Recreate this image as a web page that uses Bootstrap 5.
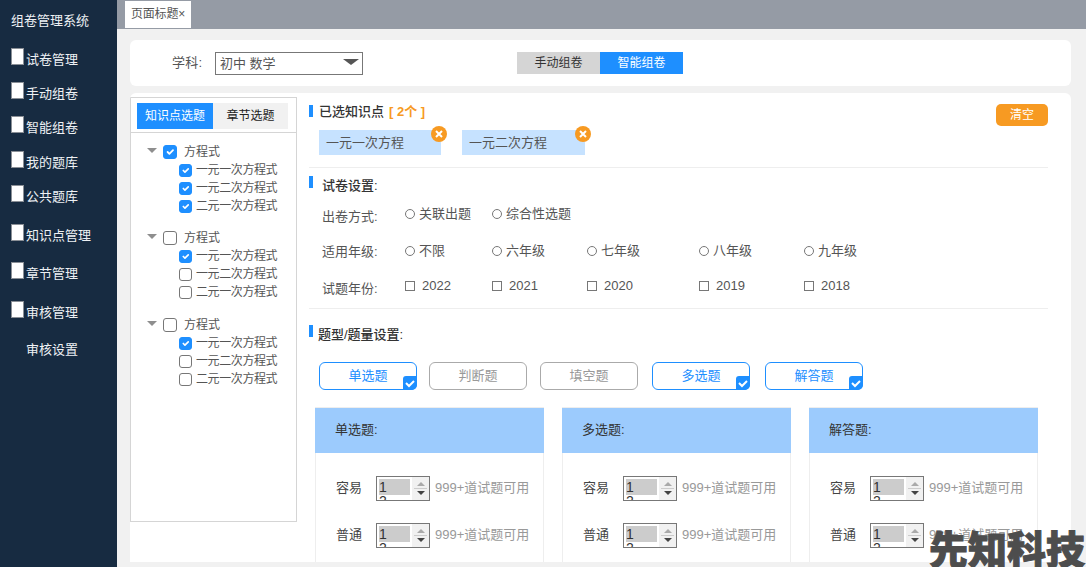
<!DOCTYPE html>
<html lang="zh">
<head>
<meta charset="utf-8">
<title>组卷管理系统</title>
<link href="https://cdn.jsdelivr.net/npm/bootstrap@5.3.0/dist/css/bootstrap.min.css" rel="stylesheet">
<style>
html, body { height: 100%; overflow: hidden; }
body { font-family: "Liberation Sans", "Noto Sans CJK SC", sans-serif; font-size: 13px; color: #555; background: #f1f1f1; }
.shell { width: 1086px; height: 567px; overflow: hidden; position: relative; }
.side { width: 117px; background: #172b41; color: #eef1f4; font-size: 13px; flex: none; }
.side-title { padding: 12px 0 0 11px; height: 50px; line-height: 18px; }
.side-item { height: 18px; padding-left: 11px; display: flex; align-items: flex-start; line-height: 20px; }
.side-ico { width: 13px; height: 17px; background: #fff; border: 1px solid #8a8f96; margin-right: 2px; margin-top: -2px; flex: none; }
.gap-a { margin-bottom: 16.2px; } .gap-b { margin-bottom: 19px; } .gap-c { margin-bottom: 21px; } .gap-d { margin-bottom: 20.5px; }
.side-item.plain { padding-left: 26px; }
.topbar { height: 29px; background: #959ba5; padding: 1px 0 0 8px; flex: none; }
.page-tab { width: 66px; height: 27px; background: #fff; color: #555; line-height: 27px; padding-left: 6px; font-size: 12px; letter-spacing: -.2px; }
.work { padding: 11px 15px 5px 13px; background: #f1f1f1; flex: 1; min-height: 0; }
.subject-card { height: 46px; background: #fff; border-radius: 6px; padding-left: 42px; margin-bottom: 7px; }
.subject-label { width: 43px; letter-spacing: .3px; }
.subject-box { width: 148px; height: 23px; border: 1px solid #777; padding-left: 4px; line-height: 22px; margin-right: 154px; position: relative; }
.subject-arrow { position: absolute; right: 3px; top: 6px; border: 8px solid transparent; border-top: 6px solid #555; border-bottom: 0; }
.switch-btn { width: 83px; height: 22px; line-height: 22px; text-align: center; background: #d5d5d5; color: #333; font-size: 12px; }
.switch-btn.on { background: #1e8fff; color: #fff; }
.main-card { height: 469px; background: #fff; border-radius: 6px 6px 0 0; overflow: hidden; }
.tree-col { width: 167px; height: 425px; margin-top: 4px; border: 1px solid #d5d5d5; flex: none; font-size: 12px; }
.tree-tabs { height: 35px; padding: 5px 0 0 6px; border-bottom: 1px solid #d5d5d5; }
.tree-tab { width: 76px; height: 26px; line-height: 26px; text-align: center; background: #f1f1f1; color: #222; }
.tree-tab.on { background: #1e8fff; color: #fff; }
.tree-body { padding: 9px 0 0 16px; }
.tree-group { margin-bottom: 15px; }
.tree-group:first-child { margin-bottom: 14px; }
.tree-group:first-child .tree-head { height: 19px; }
.tree-head { display: flex; align-items: center; height: 18px; }
.tree-tri { border: 5px solid transparent; border-top: 5px solid #8e8e8e; border-bottom: 0; margin-right: 6px; margin-top: -3px; }
.tree-leaf { display: flex; align-items: center; height: 18px; padding-left: 32px; letter-spacing: -.4px; }
.tick { width: 13px; height: 13px; margin: 0 4px 0 0; border-radius: 3px; border: 1px solid #777; flex: none; background-color: #fff; box-shadow: none !important; }
.tick:checked { background-color: #1e8fff; border-color: #1e8fff; }
.tick-lg { width: 14px; height: 14px; margin-right: 7px; }
.right-col { padding: 0 23px 0 12px; flex: 1; min-width: 0; position: relative; }
.sec-head { display: flex; align-items: center; height: 18px; color: #333; font-weight: 500; }
.sec-bar { width: 4px; height: 12px; background: #1e8fff; margin-right: 6px; margin-top: -2px; }
.sec-bar.high { margin-top: -8px; margin-right: 5px; }
.sec-count { color: #f79a22; font-weight: 700; margin-left: 5px; }
.clear-btn { position: absolute; right: 23px; top: 11px; width: 52px; height: 22px; line-height: 22px; text-align: center; color: #fff; background: #f79a22; border-radius: 5px; font-size: 12px; }
.chip-row { padding: 9px 0 0 10px; height: 47px; border-bottom: 1px solid #eee; margin-bottom: 9px; }
.chip { height: 25px; line-height: 25px; background: #c6e2ff; padding-left: 7px; position: relative; }
.chip-a { width: 122px; margin-right: 21px; } .chip-b { width: 123px; }
.chip-x { position: absolute; right: -6px; top: -4px; width: 16px; height: 16px; border-radius: 50%; background: #f79a22; }
.chip-x svg { display: block; }
.form-line { display: flex; align-items: center; height: 18px; padding-left: 13px; }
.form-name { width: 83px; color: #555; padding-top: 4px; }
.form-line.tight .form-name { padding-top: 1px; }
.form-line.low .form-name { padding-top: 6px; }
.opt { display: flex; align-items: center; }
.opt-dot { width: 10px; height: 10px; border: 1px solid #777; border-radius: 50%; margin-right: 4px; flex: none; }
.opt-sq { width: 10px; height: 10px; border: 1px solid #777; margin-right: 7px; flex: none; }
.w-87 { width: 87px; } .w-95 { width: 95px; } .w-112 { width: 112px; } .w-105 { width: 105px; }
.type-row { display: flex; padding: 18px 0 0 10px; }
.type-btn { width: 98px; height: 28px; line-height: 26px; text-align: center; border: 1px solid #aaa; border-radius: 6px; color: #999; background: #fff; position: relative; }
.type-btn:nth-child(1) { margin-right: 12px; }
.type-btn:nth-child(2) { margin-right: 13px; }
.type-btn:nth-child(3) { margin-right: 14px; }
.type-btn:nth-child(4) { margin-right: 15px; }
.type-btn.on { border-color: #1e8fff; color: #1e8fff; }
.type-tick { position: absolute; right: -1px; bottom: -1px; width: 14px; height: 14px; border-radius: 3px 0 5px 0; background: #1e8fff; }
.type-tick svg { display: block; }
.pane-row { display: flex; gap: 18px; padding: 17px 0 0 6px; }
.pane { width: 229px; height: 156px; border: 1px solid #eee; border-bottom: 0; flex: none; }
.pane-head { height: 45px; line-height: 44px; background: #9ccbfd; padding-left: 20px; margin: 0 -1px; color: #333; }
.pane-line { display: flex; align-items: center; height: 26px; padding-left: 20px; }
.pane-line.first { margin-top: 22px; margin-bottom: 21px; }
.pane-name { width: 40px; color: #444; }
.spin { width: 54px; height: 25px; border: 1px solid #777; display: flex; overflow: hidden; margin-right: 5px; flex: none; padding-left: 2px; }
.spin-list { width: 31px; color: #333; flex: none; }
.spin-sel { height: 16px; margin-top: 2px; background: #ccc; line-height: 16px; font-size: 14px; }
.spin-next { line-height: 13px; font-size: 14px; }
.spin-bar { flex: 1; margin-left: 2px; background: #f1f1f1; display: flex; flex-direction: column; align-items: center; justify-content: center; gap: 2px; }
.spin-up { border: 4px solid transparent; border-bottom: 4px solid #aaa; border-top: 0; }
.spin-down { border: 4px solid transparent; border-top: 4px solid #444; border-bottom: 0; }
.spin-rule { width: 13px; height: 1px; background: #ccc; }
.pane-hint { color: #999; white-space: nowrap; }
.stamp { position: absolute; left: 929px; top: 522px; font-family: "Noto Sans CJK SC", sans-serif; font-weight: 900; font-size: 39px; line-height: 50px; color: #4d4d4d; white-space: nowrap; -webkit-text-stroke: 1px #4d4d4d; }
</style>
</head>
<body>
<div class="shell d-flex">
  <aside class="side">
    <div class="side-title">组卷管理系统</div>
    <div class="side-item gap-a"><span class="side-ico"></span>试卷管理</div>
    <div class="side-item gap-a"><span class="side-ico"></span>手动组卷</div>
    <div class="side-item gap-a"><span class="side-ico"></span>智能组卷</div>
    <div class="side-item gap-a"><span class="side-ico"></span>我的题库</div>
    <div class="side-item gap-c"><span class="side-ico"></span>公共题库</div>
    <div class="side-item gap-d"><span class="side-ico"></span>知识点管理</div>
    <div class="side-item gap-d"><span class="side-ico"></span>章节管理</div>
    <div class="side-item gap-b"><span class="side-ico"></span>审核管理</div>
    <div class="side-item plain">审核设置</div>
  </aside>
  <div class="d-flex flex-column flex-grow-1" style="min-width:0">
    <div class="topbar"><div class="page-tab">页面标题×</div></div>
    <div class="work">
      <div class="subject-card d-flex align-items-center">
        <span class="subject-label">学科:</span>
        <div class="subject-box">初中 数学<span class="subject-arrow"></span></div>
        <div class="switch-btn">手动组卷</div>
        <div class="switch-btn on">智能组卷</div>
      </div>
      <div class="main-card d-flex">
        <div class="tree-col">
          <div class="tree-tabs d-flex">
            <div class="tree-tab on">知识点选题</div>
            <div class="tree-tab" style="width:75px">章节选题</div>
          </div>
          <div class="tree-body">
            <div class="tree-group">
              <div class="tree-head"><span class="tree-tri"></span><input class="form-check-input tick tick-lg" type="checkbox" checked>方程式</div>
              <div class="tree-leaf"><input class="form-check-input tick" type="checkbox" checked>一元一次方程式</div>
              <div class="tree-leaf"><input class="form-check-input tick" type="checkbox" checked>一元二次方程式</div>
              <div class="tree-leaf"><input class="form-check-input tick" type="checkbox" checked>二元一次方程式</div>
            </div>
            <div class="tree-group">
              <div class="tree-head"><span class="tree-tri"></span><input class="form-check-input tick tick-lg" type="checkbox">方程式</div>
              <div class="tree-leaf"><input class="form-check-input tick" type="checkbox" checked>一元一次方程式</div>
              <div class="tree-leaf"><input class="form-check-input tick" type="checkbox">一元二次方程式</div>
              <div class="tree-leaf"><input class="form-check-input tick" type="checkbox">二元一次方程式</div>
            </div>
            <div class="tree-group">
              <div class="tree-head"><span class="tree-tri"></span><input class="form-check-input tick tick-lg" type="checkbox">方程式</div>
              <div class="tree-leaf"><input class="form-check-input tick" type="checkbox" checked>一元一次方程式</div>
              <div class="tree-leaf"><input class="form-check-input tick" type="checkbox">一元二次方程式</div>
              <div class="tree-leaf"><input class="form-check-input tick" type="checkbox">二元一次方程式</div>
            </div>
          </div>
        </div>
        <div class="right-col">
          <div class="sec-head" style="margin-top:10px"><span class="sec-bar"></span>已选知识点<span class="sec-count">[ 2个 ]</span></div>
          <div class="clear-btn">清空</div>
          <div class="chip-row d-flex align-items-start">
            <div class="chip chip-a">一元一次方程<span class="chip-x"><svg width="16" height="16" viewBox="0 0 16 16"><path d="M5 5l6 6M11 5l-6 6" stroke="#fff" stroke-width="2"/></svg></span></div>
            <div class="chip chip-b">一元二次方程<span class="chip-x"><svg width="16" height="16" viewBox="0 0 16 16"><path d="M5 5l6 6M11 5l-6 6" stroke="#fff" stroke-width="2"/></svg></span></div>
          </div>
          <div class="sec-head"><span class="sec-bar high"></span><span class="ms-1">试卷设置:</span></div>
          <div class="form-line low" style="margin-top:10px"><span class="form-name">出卷方式:</span>
            <span class="opt w-87"><i class="opt-dot"></i>关联出题</span>
            <span class="opt"><i class="opt-dot"></i>综合性选题</span>
          </div>
          <div class="form-line tight" style="margin-top:19px"><span class="form-name">适用年级:</span>
            <span class="opt w-87"><i class="opt-dot"></i>不限</span>
            <span class="opt w-95"><i class="opt-dot"></i>六年级</span>
            <span class="opt w-112"><i class="opt-dot"></i>七年级</span>
            <span class="opt w-105"><i class="opt-dot"></i>八年级</span>
            <span class="opt"><i class="opt-dot"></i>九年级</span>
          </div>
          <div class="form-line low" style="margin-top:17px"><span class="form-name">试题年份:</span>
            <span class="opt w-87"><i class="opt-sq"></i>2022</span>
            <span class="opt w-95"><i class="opt-sq"></i>2021</span>
            <span class="opt w-112"><i class="opt-sq"></i>2020</span>
            <span class="opt w-105"><i class="opt-sq"></i>2019</span>
            <span class="opt"><i class="opt-sq"></i>2018</span>
          </div>
          <div class="border-bottom" style="margin-top:13px;border-color:#eee !important"></div>
          <div class="sec-head" style="margin-top:17px"><span class="sec-bar high"></span>题型/题量设置:</div>
          <div class="type-row">
            <div class="type-btn on">单选题<span class="type-tick"><svg width="14" height="14" viewBox="0 0 14 14"><path d="M3 7l3 3 5-5" fill="none" stroke="#fff" stroke-width="2"/></svg></span></div>
            <div class="type-btn">判断题</div>
            <div class="type-btn">填空题</div>
            <div class="type-btn on">多选题<span class="type-tick"><svg width="14" height="14" viewBox="0 0 14 14"><path d="M3 7l3 3 5-5" fill="none" stroke="#fff" stroke-width="2"/></svg></span></div>
            <div class="type-btn on">解答题<span class="type-tick"><svg width="14" height="14" viewBox="0 0 14 14"><path d="M3 7l3 3 5-5" fill="none" stroke="#fff" stroke-width="2"/></svg></span></div>
          </div>
          <div class="pane-row">
            <div class="pane">
              <div class="pane-head">单选题:</div>
              <div class="pane-line first"><span class="pane-name">容易</span><div class="spin"><div class="spin-list"><div class="spin-sel">1</div><div class="spin-next">2</div></div><div class="spin-bar"><i class="spin-up"></i><i class="spin-rule"></i><i class="spin-down"></i></div></div><span class="pane-hint">999+道试题可用</span></div>
              <div class="pane-line"><span class="pane-name">普通</span><div class="spin"><div class="spin-list"><div class="spin-sel">1</div><div class="spin-next">2</div></div><div class="spin-bar"><i class="spin-up"></i><i class="spin-rule"></i><i class="spin-down"></i></div></div><span class="pane-hint">999+道试题可用</span></div>
            </div>
            <div class="pane">
              <div class="pane-head">多选题:</div>
              <div class="pane-line first"><span class="pane-name">容易</span><div class="spin"><div class="spin-list"><div class="spin-sel">1</div><div class="spin-next">2</div></div><div class="spin-bar"><i class="spin-up"></i><i class="spin-rule"></i><i class="spin-down"></i></div></div><span class="pane-hint">999+道试题可用</span></div>
              <div class="pane-line"><span class="pane-name">普通</span><div class="spin"><div class="spin-list"><div class="spin-sel">1</div><div class="spin-next">2</div></div><div class="spin-bar"><i class="spin-up"></i><i class="spin-rule"></i><i class="spin-down"></i></div></div><span class="pane-hint">999+道试题可用</span></div>
            </div>
            <div class="pane">
              <div class="pane-head">解答题:</div>
              <div class="pane-line first"><span class="pane-name">容易</span><div class="spin"><div class="spin-list"><div class="spin-sel">1</div><div class="spin-next">2</div></div><div class="spin-bar"><i class="spin-up"></i><i class="spin-rule"></i><i class="spin-down"></i></div></div><span class="pane-hint">999+道试题可用</span></div>
              <div class="pane-line"><span class="pane-name">普通</span><div class="spin"><div class="spin-list"><div class="spin-sel">1</div><div class="spin-next">2</div></div><div class="spin-bar"><i class="spin-up"></i><i class="spin-rule"></i><i class="spin-down"></i></div></div><span class="pane-hint">999+道试题可用</span></div>
            </div>
          </div>
        </div>
      </div>
    </div>
  </div>
  <div class="stamp">先知科技</div>
</div>
<script src="https://cdn.jsdelivr.net/npm/bootstrap@5.3.0/dist/js/bootstrap.bundle.min.js"></script>
</body>
</html>
